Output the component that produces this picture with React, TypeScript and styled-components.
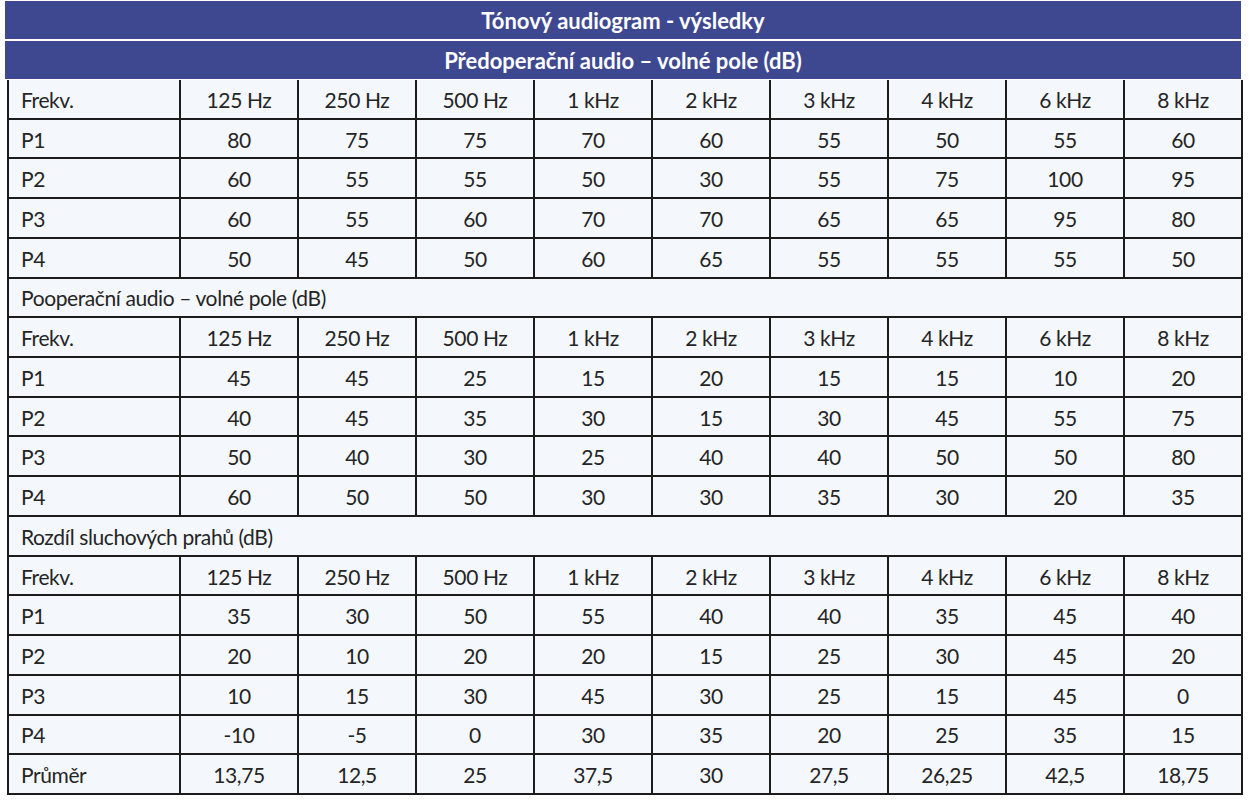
import React from "react";
import styled, { createGlobalStyle } from "styled-components";

const GlobalStyle = createGlobalStyle`
  html, body {
    margin: 0;
    padding: 0;
    background: #ffffff;
  }
  body {
    font-family: Lato, "Noto Sans", "Liberation Sans", sans-serif;
  }
`;

const Page = styled.div`
  width: 1249px;
  padding: 1px 0 0 5px;
  box-sizing: border-box;
`;

const Banner = styled.div`
  width: 1236px;
  height: 38px;
  margin-bottom: 2px;
  background: #3e4890;
  color: #ffffff;
  display: flex;
  align-items: center;
  justify-content: center;
  font-size: 22px;
  font-weight: 700;
  letter-spacing: 0px;
`;

const Grid = styled.div`
  margin-left: 2px;
  width: 1236px;
  box-sizing: border-box;
  border-left: 2px solid #1c1c1c;
  display: grid;
  grid-template-columns: 172px repeat(9, 118px);
  grid-template-rows: repeat(18, 1fr);
  height: 715px;
  margin-top: -1px;
  background: #f4f7fb;
`;

const Cell = styled.div<{ $left?: boolean; $span?: boolean }>`
  box-sizing: border-box;
  border-right: 2px solid #1c1c1c;
  border-bottom: 2px solid #1c1c1c;
  display: flex;
  align-items: center;
  justify-content: ${(p) => (p.$left ? "flex-start" : "center")};
  padding: 0 ${(p) => (p.$left ? "12px" : "0")};
  padding-top: 1px;
  grid-column: ${(p) => (p.$span ? "1 / -1" : "auto")};
  font-size: 21px;
  font-weight: 400;
  letter-spacing: -0.4px;
  color: #252525;
  white-space: nowrap;
`;

const freqs = ["125 Hz", "250 Hz", "500 Hz", "1 kHz", "2 kHz", "3 kHz", "4 kHz", "6 kHz", "8 kHz"];

type Row = [string, string[]];

const pre: Row[] = [
  ["P1", ["80", "75", "75", "70", "60", "55", "50", "55", "60"]],
  ["P2", ["60", "55", "55", "50", "30", "55", "75", "100", "95"]],
  ["P3", ["60", "55", "60", "70", "70", "65", "65", "95", "80"]],
  ["P4", ["50", "45", "50", "60", "65", "55", "55", "55", "50"]],
];

const post: Row[] = [
  ["P1", ["45", "45", "25", "15", "20", "15", "15", "10", "20"]],
  ["P2", ["40", "45", "35", "30", "15", "30", "45", "55", "75"]],
  ["P3", ["50", "40", "30", "25", "40", "40", "50", "50", "80"]],
  ["P4", ["60", "50", "50", "30", "30", "35", "30", "20", "35"]],
];

const diff: Row[] = [
  ["P1", ["35", "30", "50", "55", "40", "40", "35", "45", "40"]],
  ["P2", ["20", "10", "20", "20", "15", "25", "30", "45", "20"]],
  ["P3", ["10", "15", "30", "45", "30", "25", "15", "45", "0"]],
  ["P4", ["-10", "-5", "0", "30", "35", "20", "25", "35", "15"]],
  ["Průměr", ["13,75", "12,5", "25", "37,5", "30", "27,5", "26,25", "42,5", "18,75"]],
];

const DataRow: React.FC<{ label: string; values: string[] }> = ({ label, values }) => (
  <>
    <Cell $left>{label}</Cell>
    {values.map((v, i) => (
      <Cell key={i}>{v}</Cell>
    ))}
  </>
);

const Block: React.FC<{ rows: Row[] }> = ({ rows }) => (
  <>
    <DataRow label="Frekv." values={freqs} />
    {rows.map(([l, v]) => (
      <DataRow key={l} label={l} values={v} />
    ))}
  </>
);

export default function App() {
  return (
    <Page>
      <GlobalStyle />
      <Banner>Tónový audiogram - výsledky</Banner>
      <Banner>Předoperační audio – volné pole (dB)</Banner>
      <Grid>
        <Block rows={pre} />
        <Cell $left $span>Pooperační audio – volné pole (dB)</Cell>
        <Block rows={post} />
        <Cell $left $span>Rozdíl sluchových prahů (dB)</Cell>
        <Block rows={diff} />
      </Grid>
    </Page>
  );
}
